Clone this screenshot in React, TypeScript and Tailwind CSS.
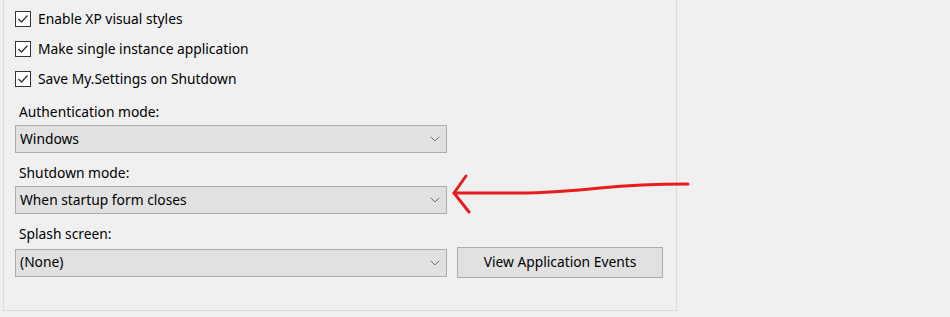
import { ChevronDown } from 'lucide-react'

const font = { fontFamily: '"Noto Sans", "Liberation Sans", sans-serif' }

function CheckRow({ label }: { label: string }) {
  return (
    <div className="h-[30px] flex items-center gap-[7px]">
      <span className="w-[16px] h-[16px] border border-[#333333] bg-white flex items-center justify-center">
        <svg width="12" height="10" viewBox="0 0 12 10" fill="none">
          <path d="M1.5 5 L4.5 8 L10.5 1.5" stroke="#333333" strokeWidth="1.3" />
        </svg>
      </span>
      <span>{label}</span>
    </div>
  )
}

function Combo({ value }: { value: string }) {
  return (
    <div className="w-[432px] h-[28px] border border-[#adadad] bg-[#e1e1e1] flex items-center pl-[4px] pr-[3px]">
      <span className="flex-1">{value}</span>
      <ChevronDown size={16} strokeWidth={1.1} className="text-[#444444]" />
    </div>
  )
}

function Field({ label, children }: { label: string; children: React.ReactNode }) {
  return (
    <div className="flex flex-col">
      <div className="h-[20px] leading-[20px] pl-[4px]">{label}</div>
      <div className="mt-[3px]">{children}</div>
    </div>
  )
}

export default function App() {
  return (
    <div className="w-[950px] h-[317px] bg-[#f0f0f0] text-[13.8px] text-black relative overflow-hidden" style={font}>
      {/* Settings panel */}
      <div className="ml-[3px] w-[674px] h-[311px] border-l border-r border-b border-[#dadada] pl-[11px] pt-[4px] flex flex-col">
        <CheckRow label="Enable XP visual styles" />
        <CheckRow label="Make single instance application" />
        <CheckRow label="Save My.Settings on Shutdown" />

        <div className="mt-[8px] flex flex-col gap-[10px]">
          <Field label="Authentication mode:">
            <Combo value="Windows" />
          </Field>
          <Field label="Shutdown mode:">
            <Combo value="When startup form closes" />
          </Field>
          <Field label="Splash screen:">
            <div className="flex items-center gap-[10px]">
              <Combo value="(None)" />
              <button className="w-[206px] h-[31px] border border-[#adadad] bg-[#e1e1e1] flex items-center justify-center">
                View Application Events
              </button>
            </div>
          </Field>
        </div>
      </div>

      {/* Red annotation arrow */}
      <svg className="absolute left-0 top-0 pointer-events-none" width="950" height="317">
        <path
          d="M688 184 C660 184 630 185 600 188 C570 191 545 193 520 193 C495 193 470 193 454 193"
          stroke="#e81c1c"
          strokeWidth="3"
          fill="none"
          strokeLinecap="round"
        />
        <path d="M466 176 L454 193 L469 212" stroke="#e81c1c" strokeWidth="3" fill="none" strokeLinecap="round" strokeLinejoin="round" />
      </svg>
    </div>
  )
}
